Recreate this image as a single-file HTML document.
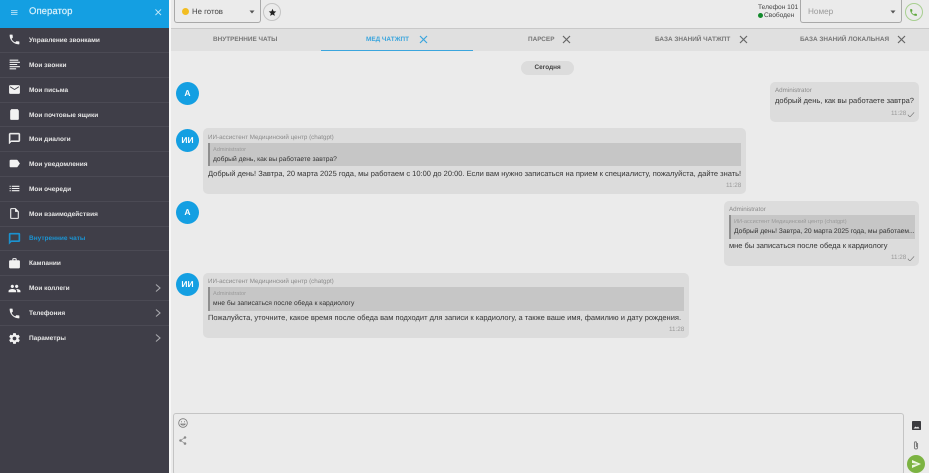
<!DOCTYPE html>
<html lang="ru"><head><meta charset="utf-8"><title>Оператор</title>
<style>
html,body{margin:0;padding:0;width:929px;height:473px;overflow:hidden;background:#ebebeb;font-family:"Liberation Sans",sans-serif;color:#333;text-rendering:geometricPrecision}
#root{position:relative;width:929px;height:473px;overflow:hidden;filter:blur(.35px)}
#root div,#root svg{position:absolute}
.t{white-space:nowrap;line-height:10px}
.side{left:0;top:0;width:169px;height:473px;background:#3f3e48}
.head{left:0;top:0;width:169px;height:28px;background:#149fe2}
.row{left:0;width:169px;height:1px;background:#4b4a54}
.m{left:29px;font-size:6.5px;font-weight:bold;color:#e6e6e6}
.ic{left:8px;width:13px;height:13px;fill:#f2f2f2}
.chev{left:155px;width:6px;height:8px;fill:none;stroke:#a9a9ae;stroke-width:1.1}
.tab{font-size:6.4px;font-weight:bold;color:#777;top:35px}
.x{width:9px;height:9px;stroke:#666;stroke-width:1.2;fill:none;top:35px}
.av{width:23px;height:23px;border-radius:50%;background:#149fe2;color:#fff;font-weight:bold;font-size:8.5px;text-align:center;line-height:23px;left:176px}
.b{background:#dcdcdc;border-radius:5px}
.q{background:#c6c6c6;border-left:2px solid #8f8f8f;box-sizing:border-box}
.n{font-size:6.25px;color:#8b8b8b}
.qn{font-size:5.6px;color:#9a9a9a}
.qt{font-size:6.7px;color:#333}
.msg{font-size:7.5px;color:#333}
.tm{font-size:6.3px;color:#999}
.chk{width:8px;height:5.5px;fill:none;stroke:#777;stroke-width:.8}
</style></head><body>
<div id="root">
<svg width="0" height="0" style="position:absolute"><defs>
<symbol id="call" viewBox="0 0 24 24"><path d="M6.62 10.79c1.44 2.83 3.76 5.14 6.59 6.59l2.2-2.2c.27-.27.67-.36 1.02-.24 1.12.37 2.33.57 3.57.57.55 0 1 .45 1 1V20c0 .55-.45 1-1 1-9.39 0-17-7.61-17-17 0-.55.45-1 1-1h3.5c.55 0 1 .45 1 1 0 1.25.2 2.45.57 3.57.11.35.03.74-.25 1.02l-2.2 2.2z"/></symbol>
</defs></svg>

<div class="side"></div>
<div class="head"></div>
<svg style="left:11px;top:9.5px;width:6.5px;height:5px" viewBox="0 0 6.5 5"><path d="M0 .6h6.5M0 2.5h6.5M0 4.400h6.5" stroke="#a9dcf6" stroke-width="1"/></svg>
<div class="t" style="left:29px;top:6px;font-size:9.6px;line-height:12px;color:#d8f0fb;-webkit-text-stroke:.2px #d8f0fb">Оператор</div>
<svg style="left:155px;top:9px;width:6.5px;height:6.5px" viewBox="0 0 7 7"><path d="M.5.5l6 6M6.5.5l-6 6" stroke="#c9ebfa" stroke-width="1"/></svg>

<div class="row" style="top:52px"></div><div class="row" style="top:77px"></div><div class="row" style="top:102px"></div><div class="row" style="top:126px"></div><div class="row" style="top:151px"></div><div class="row" style="top:176px"></div><div class="row" style="top:201px"></div><div class="row" style="top:226px"></div><div class="row" style="top:250px"></div><div class="row" style="top:275px"></div><div class="row" style="top:300px"></div><div class="row" style="top:325px"></div>

<svg class="ic" style="top:33px" viewBox="0 0 24 24"><use href="#call"/></svg>
<svg class="ic" style="top:58px" viewBox="0 0 24 24"><path d="M3 3h16v2H3zM3 7h19v2H3zM3 11h14v2H3zM3 15h19v2H3zM3 19h12v2H3z"/></svg>
<svg class="ic" style="top:83px" viewBox="0 0 24 24"><path d="M20 4H4c-1.100 0-2 .9-2 2v12c0 1.100.9 2 2 2h16c1.100 0 2-.9 2-2V6c0-1.100-.9-2-2-2zm0 4l-8 5-8-5V6l8 5 8-5v2z"/></svg>
<svg class="ic" style="top:108px" viewBox="0 0 24 24"><path d="M6 2h12l2 3v15c0 1.100-.9 2-2 2H6c-1.100 0-2-.9-2-2V5z"/></svg>
<svg class="ic" style="top:132px;stroke:#f2f2f2;stroke-width:.9" viewBox="0 0 24 24"><path d="M20 2H4c-1.100 0-2 .9-2 2v18l4-4h14c1.100 0 2-.9 2-2V4c0-1.100-.9-2-2-2zm0 14H6l-2 2V4h16v12z"/></svg>
<svg class="ic" style="top:157px" viewBox="0 0 24 24"><path d="M17.630 5.840C17.270 5.330 16.670 5 16 5L5 5.010C3.900 5.010 3 5.900 3 7v10c0 1.100.9 1.990 2 1.990L16 19c.67 0 1.270-.33 1.630-.84L22 12l-4.370-6.160z"/></svg>
<svg class="ic" style="top:182px" viewBox="0 0 24 24"><path d="M3 13h2v-2H3v2zm0 4h2v-2H3v2zm0-8h2V7H3v2zm4 4h14v-2H7v2zm0 4h14v-2H7v2zM7 7v2h14V7H7z"/></svg>
<svg class="ic" style="top:207px" viewBox="0 0 24 24"><path d="M14 2H6c-1.100 0-1.990.9-1.990 2L4 20c0 1.100.89 2 1.990 2H18c1.100 0 2-.9 2-2V8l-6-6zm4 18H6V4h7v5h5v11z"/></svg>
<svg class="ic" style="top:232px;fill:#1b94d2;stroke:#1b94d2;stroke-width:1" viewBox="0 0 24 24"><path d="M20 2H4c-1.100 0-2 .9-2 2v18l4-4h14c1.100 0 2-.9 2-2V4c0-1.100-.9-2-2-2zm0 14H6l-2 2V4h16v12z"/></svg>
<svg class="ic" style="top:257px" viewBox="0 0 24 24"><path d="M20 6h-4V4c0-1.110-.89-2-2-2h-4c-1.110 0-2 .89-2 2v2H4c-1.110 0-1.990.89-1.990 2L2 19c0 1.110.89 2 2 2h16c1.110 0 2-.89 2-2V8c0-1.110-.89-2-2-2zm-6 0h-4V4h4v2z"/></svg>
<svg class="ic" style="top:282px" viewBox="0 0 24 24"><path d="M16 11c1.660 0 2.990-1.340 2.990-3S17.660 5 16 5c-1.660 0-3 1.340-3 3s1.340 3 3 3zm-8 0c1.660 0 2.990-1.340 2.990-3S9.660 5 8 5C6.340 5 5 6.340 5 8s1.340 3 3 3zm0 2c-2.330 0-7 1.170-7 3.500V19h14v-2.500c0-2.330-4.670-3.500-7-3.500zm8 0c-.29 0-.62.02-.97.05 1.160.84 1.970 1.970 1.970 3.450V19h6v-2.500c0-2.330-4.670-3.500-7-3.500z"/></svg>
<svg class="ic" style="top:307px" viewBox="0 0 24 24"><use href="#call"/></svg>
<svg class="ic" style="top:332px" viewBox="0 0 24 24"><path d="M19.430 12.980c.04-.32.07-.64.07-.98s-.03-.66-.07-.98l2.110-1.650c.19-.15.24-.42.12-.64l-2-3.460c-.12-.22-.39-.3-.61-.22l-2.490 1c-.52-.4-1.080-.73-1.690-.98l-.38-2.650C14.460 2.180 14.250 2 14 2h-4c-.25 0-.46.18-.49.42l-.38 2.650c-.61.25-1.170.59-1.690.98l-2.490-1c-.23-.09-.49 0-.61.22l-2 3.460c-.13.22-.07.49.12.64l2.110 1.650c-.04.32-.07.65-.07.98s.03.66.07.98l-2.110 1.650c-.19.15-.24.42-.12.64l2 3.460c.12.22.39.3.61.22l2.490-1c.52.4 1.080.73 1.690.98l.38 2.650c.03.24.24.42.49.42h4c.25 0 .46-.18.49-.42l.38-2.650c.61-.25 1.170-.59 1.690-.98l2.490 1c.23.09.49 0 .61-.22l2-3.460c.12-.22.07-.49-.12-.64l-2.110-1.650zM12 15.500c-1.930 0-3.500-1.570-3.500-3.500s1.570-3.500 3.500-3.500 3.500 1.570 3.500 3.500-1.570 3.500-3.500 3.500z"/></svg>

<div class="t m" style="top:36px">Управление звонками</div>
<div class="t m" style="top:61px">Мои звонки</div>
<div class="t m" style="top:86px">Мои письма</div>
<div class="t m" style="top:111px">Мои почтовые ящики</div>
<div class="t m" style="top:135px">Мои диалоги</div>
<div class="t m" style="top:160px">Мои уведомления</div>
<div class="t m" style="top:185px">Мои очереди</div>
<div class="t m" style="top:210px">Мои взаимодействия</div>
<div class="t m" style="top:234px;color:#1b94d2">Внутренние чаты</div>
<div class="t m" style="top:259px">Кампании</div>
<div class="t m" style="top:284px">Мои коллеги</div>
<div class="t m" style="top:309px">Телефония</div>
<div class="t m" style="top:334px">Параметры</div>
<svg class="chev" style="top:284px" viewBox="0 0 6 8"><path d="M1 .5L5 4 1 7.500"/></svg>
<svg class="chev" style="top:309px" viewBox="0 0 6 8"><path d="M1 .5L5 4 1 7.500"/></svg>
<svg class="chev" style="top:334px" viewBox="0 0 6 8"><path d="M1 .5L5 4 1 7.500"/></svg>

<!-- top bar -->
<div style="left:169px;top:0;width:2px;height:473px;background:#f7f7f7"></div>
<div style="left:171px;top:28px;width:758px;height:23px;background:#e0e0e0;border-top:1px solid #c9c9c9;box-sizing:border-box"></div>
<div style="left:174px;top:0;width:87px;height:23px;border:1px solid #a9a9a9;border-top:0;border-radius:0 0 3px 3px;box-sizing:border-box;background:#ebebeb"></div>
<div style="left:182px;top:8px;width:7px;height:7px;border-radius:50%;background:#f2bd22"></div>
<div class="t" style="left:192px;top:7px;font-size:7.8px;color:#444">Не готов</div>
<svg style="left:249px;top:10px;width:6px;height:4px" viewBox="0 0 6 4"><path d="M.5.500h5L3 3.500z" fill="#555"/></svg>
<div style="left:263px;top:3px;width:18px;height:18px;border:1px solid #c4c4c4;border-radius:50%;box-sizing:border-box"></div>
<svg style="left:267.500px;top:7.500px;width:9px;height:9px" viewBox="0 0 24 24"><path d="M12 17.270L18.180 21l-1.640-7.030L22 9.240l-7.190-.61L12 2 9.190 8.630 2 9.240l5.460 4.730L5.820 21z" fill="#222"/></svg>

<div class="t" style="left:758px;top:3px;font-size:6.6px;color:#444">Телефон 101</div>
<div style="left:757.500px;top:13px;width:5px;height:5px;border-radius:50%;background:#138a2c"></div>
<div class="t" style="left:764px;top:11px;font-size:6.6px;color:#444">Свободен</div>
<div style="left:800px;top:0;width:102px;height:23px;border:1px solid #a9a9a9;border-top:0;border-radius:0 0 3px 3px;box-sizing:border-box"></div>
<div class="t" style="left:808px;top:7px;font-size:8.2px;color:#9a9a9a">Номер</div>
<svg style="left:890px;top:10px;width:6px;height:4px" viewBox="0 0 6 4"><path d="M.5.500h5L3 3.500z" fill="#555"/></svg>
<div style="left:904.500px;top:3px;width:18px;height:18px;border:1px solid #a8cf91;border-radius:50%;box-sizing:border-box"></div>
<svg style="left:909px;top:7.500px;width:9px;height:9px;fill:#5fa83e" viewBox="0 0 24 24"><use href="#call"/></svg>

<!-- tabs -->
<div class="t tab" style="left:213px">ВНУТРЕННИЕ ЧАТЫ</div>
<div class="t tab" style="left:366px;color:#3aa5dd">МЕД ЧАТЖПТ</div>
<svg class="x" style="left:419px;stroke:#3aa5dd" viewBox="0 0 9 9"><path d="M1 1l7 7M8 1L1 8"/></svg>
<div class="t tab" style="left:528px">ПАРСЕР</div>
<svg class="x" style="left:561.500px" viewBox="0 0 9 9"><path d="M1 1l7 7M8 1L1 8"/></svg>
<div class="t tab" style="left:655px">БАЗА ЗНАНИЙ ЧАТЖПТ</div>
<svg class="x" style="left:739px" viewBox="0 0 9 9"><path d="M1 1l7 7M8 1L1 8"/></svg>
<div class="t tab" style="left:800px">БАЗА ЗНАНИЙ ЛОКАЛЬНАЯ</div>
<svg class="x" style="left:897px" viewBox="0 0 9 9"><path d="M1 1l7 7M8 1L1 8"/></svg>
<div style="left:321px;top:50px;width:152px;height:1px;background:#3aa5dd"></div>

<div style="left:521px;top:61px;width:53px;height:14px;border-radius:7px;background:#dcdcdc"></div>
<div class="t" style="left:534.500px;top:63px;font-size:6.4px;font-weight:bold;color:#444">Сегодня</div>

<!-- avatars -->
<div class="av" style="top:82px">А</div>
<div class="av" style="top:129px">ИИ</div>
<div class="av" style="top:201px">А</div>
<div class="av" style="top:273px">ИИ</div>

<!-- bubble 1 -->
<div class="b" style="left:770px;top:82px;width:149px;height:40px"></div>
<div class="t n" style="left:775px;top:86px">Administrator</div>
<div class="t msg" style="left:775px;top:96px">добрый день, как вы работаете завтра?</div>
<div class="t tm" style="left:891px;top:109px">11:28</div>
<svg class="chk" style="left:907px;top:111.500px" viewBox="0 0 9 7"><path d="M.5 3.500L3 6.500 8.500.5"/></svg>

<!-- bubble 2 -->
<div class="b" style="left:203px;top:128px;width:543px;height:66px"></div>
<div class="t n" style="left:208px;top:133px">ИИ-ассистент Медицинский центр (chatgpt)</div>
<div class="q" style="left:208px;top:143px;width:533px;height:23px"></div>
<div class="t qn" style="left:213px;top:145px">Administrator</div>
<div class="t qt" style="left:213px;top:155px">добрый день, как вы работаете завтра?</div>
<div class="t msg" style="left:208px;top:169px">Добрый день! Завтра, 20 марта 2025 года, мы работаем с 10:00 до 20:00. Если вам нужно записаться на прием к специалисту, пожалуйста, дайте знать!</div>
<div class="t tm" style="left:726px;top:181px">11:28</div>

<!-- bubble 3 -->
<div class="b" style="left:724px;top:201px;width:195px;height:65px"></div>
<div class="t n" style="left:729px;top:205px">Administrator</div>
<div class="q" style="left:729px;top:215px;width:186px;height:24px"></div>
<div class="t qn" style="left:734px;top:217px">ИИ-ассистент Медицинский центр (chatgpt)</div>
<div class="t qt" style="left:734px;top:227px">Добрый день! Завтра, 20 марта 2025 года, мы работаем...</div>
<div class="t msg" style="left:729px;top:241px">мне бы записаться после обеда к кардиологу</div>
<div class="t tm" style="left:891px;top:253px">11:28</div>
<svg class="chk" style="left:907px;top:255.500px" viewBox="0 0 9 7"><path d="M.5 3.500L3 6.500 8.500.5"/></svg>

<!-- bubble 4 -->
<div class="b" style="left:203px;top:273px;width:486px;height:65px"></div>
<div class="t n" style="left:208px;top:277px">ИИ-ассистент Медицинский центр (chatgpt)</div>
<div class="q" style="left:208px;top:287px;width:476px;height:24px"></div>
<div class="t qn" style="left:213px;top:289px">Administrator</div>
<div class="t qt" style="left:213px;top:299px">мне бы записаться после обеда к кардиологу</div>
<div class="t msg" style="left:208px;top:313px">Пожалуйста, уточните, какое время после обеда вам подходит для записи к кардиологу, а также ваше имя, фамилию и дату рождения.</div>
<div class="t tm" style="left:669px;top:325px">11:28</div>

<!-- input -->
<div style="left:173px;top:413px;width:731px;height:62px;border:1px solid #c4c4c4;border-radius:3px;box-sizing:border-box"></div>
<svg style="left:177.500px;top:417.500px;width:10px;height:10px;fill:none;stroke:#777;stroke-width:.8" viewBox="0 0 10 10"><circle cx="5" cy="5" r="4.300"/><path d="M3 3.800h1M6 3.800h1M2.800 6c.5 1.500 3.900 1.500 4.400 0z"/></svg>
<svg style="left:178.500px;top:435.500px;width:8px;height:9px;fill:#888;stroke:#888;stroke-width:.6" viewBox="0 0 8 9"><circle cx="1.500" cy="4.500" r="1"/><circle cx="6" cy="1.500" r="1"/><circle cx="6" cy="7.500" r="1"/><path d="M1.500 4.500L6 1.500M1.500 4.500L6 7.500" fill="none"/></svg>
<svg style="left:912px;top:421px;width:9px;height:9px" viewBox="0 0 9 9"><rect width="9" height="9" rx=".8" fill="#3a3a3e"/><path d="M1.500 7.500L3.500 5.500 5 6.500 6 5.500 7.500 7.500z" fill="#eee"/></svg>
<svg style="left:913px;top:441px;width:6px;height:9px;fill:none;stroke:#808080;stroke-width:1.1" viewBox="0 0 6 9"><path d="M4.500 2v4.500a1.500 1.500 0 0 1-3 0V1.800a1 1 0 0 1 2 0V6"/></svg>
<div style="left:907px;top:455px;width:18px;height:18px;border-radius:50%;background:#7cb342"></div>
<svg style="left:912px;top:460px;width:9px;height:8px" viewBox="0 0 9 8"><path d="M0 0l9 4-9 4V5l6-1-6-1z" fill="#eef6e4"/></svg>
</div>
</body></html>
